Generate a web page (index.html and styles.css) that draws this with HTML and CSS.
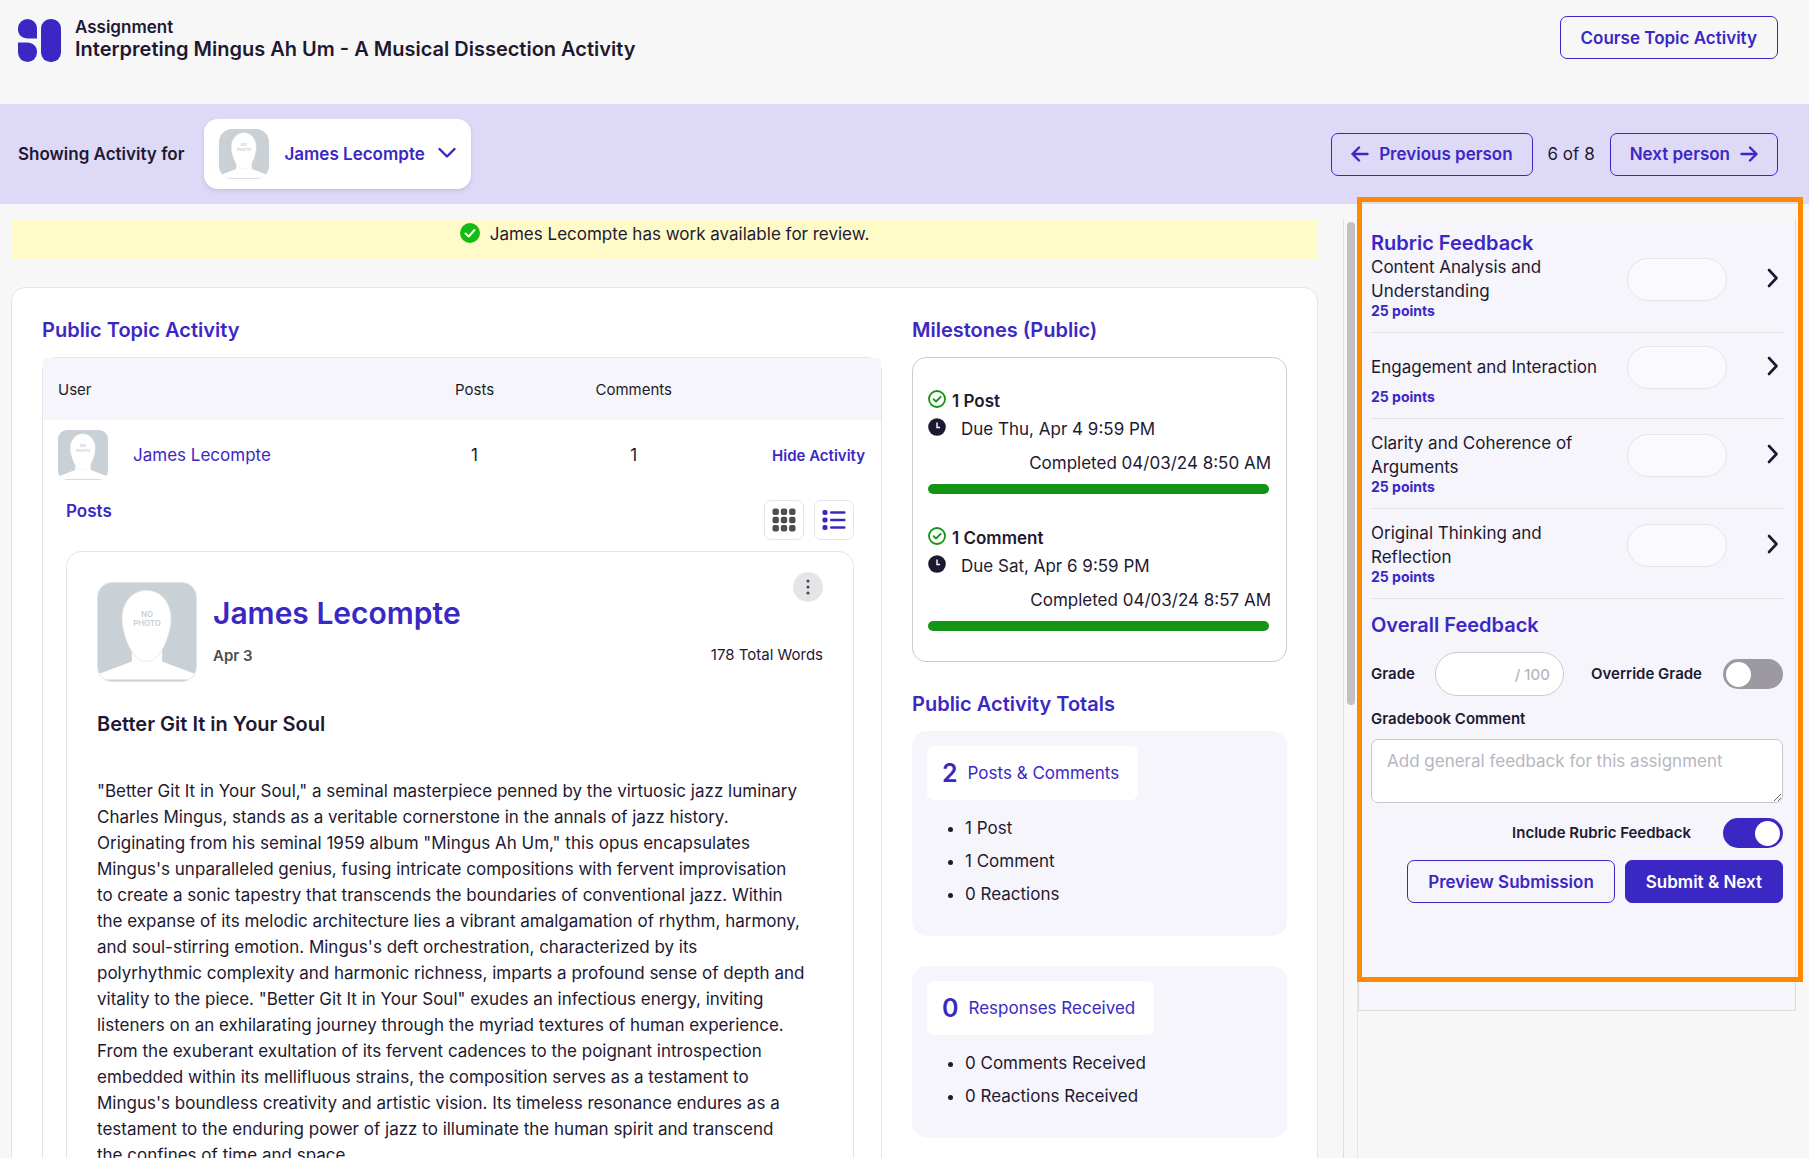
FILE: index.html
```html
<!doctype html>
<html lang="en">
<head>
    <meta charset="UTF-8">
    <meta name="viewport" content="width=device-width, initial-scale=1.0">
    <title>Interpreting Mingus Ah Um - A Musical Dissection Activity</title>
    <link rel="stylesheet" href="styles.css">
</head>
<body>

<!-- shared icons -->
<svg class="sprite" aria-hidden="true">
    <symbol id="no-photo" viewBox="0 0 100 100">
        <rect width="100" height="100" fill="#c9d0d6"/>
        <path d="M0 93 L34.5 80 V66 H65.5 V80 L100 93 V98.5 H0 Z" fill="#fff"/>
        <path d="M49.5 7.5 C64 7.5 74.5 20 74.5 36 C74.5 50 68 66 62 73.500 C58 78.500 54 80 49.500 80 C45 80 41 78.500 37 73.500 C31 66 24.500 50 24.500 36 C24.500 20 35 7.500 49.500 7.500 Z" fill="#fff" stroke="#dfe3e6" stroke-width=".8"/>
        <text x="50" y="34.500" class="no-photo-text">NO</text>
        <text x="50" y="43.500" class="no-photo-text">PHOTO</text>
    </symbol>
    <symbol id="chevron-right" viewBox="0 0 12 20">
        <path d="M2 2 L9.500 10 L2 18" fill="none" stroke="currentColor" stroke-width="2.600" stroke-linecap="round" stroke-linejoin="round"/>
    </symbol>
    <symbol id="done" viewBox="0 0 18 18">
        <circle cx="9" cy="9" r="8" fill="none" stroke="#149414" stroke-width="1.800"/>
        <path d="M5.500 9.200 L8 11.500 L12.700 6.800" fill="none" stroke="#149414" stroke-width="1.800" stroke-linecap="round" stroke-linejoin="round"/>
    </symbol>
    <symbol id="clock" viewBox="0 0 18 18">
        <circle cx="9" cy="9" r="8.800" fill="#1e1932"/>
        <path d="M9 4.500 V9.500 H12" fill="none" stroke="#fff" stroke-width="1.400"/>
    </symbol>
</svg>

<header class="top">
    <svg class="logo" viewBox="0 0 43 43">
        <path d="M9.500 0 A9.500 9.500 0 0 1 19 9.500 V19.500 H10 C4 19.500 0 15.500 0 10.500 V9.500 A9.500 9.500 0 0 1 9.500 0 Z"/>
        <path d="M0 23.500 H9 C15 23.500 19 27.500 19 32.500 V33.500 A9.500 9.500 0 0 1 0 33.500 Z"/>
        <rect x="23" width="20" height="43" rx="9.500"/>
    </svg>
    <div class="top-title">
        <p>Assignment</p>
        <h1>Interpreting Mingus Ah Um - A Musical Dissection Activity</h1>
    </div>
    <button class="btn" type="button">Course Topic Activity</button>
</header>

<nav class="person-bar">
    <label for="person">Showing Activity for</label>
    <div class="person-card">
        <svg class="avatar avatar-round"><use href="#no-photo"/></svg>
        <div class="person-select">
            <select id="person">
                <option>James Lecompte</option>
            </select>
            <svg class="chevron-down" viewBox="0 0 18 12"><path d="M1.500 2 L9 9.500 L16.500 2" fill="none" stroke="currentColor" stroke-width="2.400" stroke-linecap="round" stroke-linejoin="round"/></svg>
        </div>
    </div>
    <div class="pager">
        <button class="btn" type="button">
            <svg class="arrow" viewBox="0 0 18 16"><path d="M8 1.500 L1.500 8 L8 14.500 M1.500 8 H16.500"/></svg>
            Previous person
        </button>
        <span>6 of 8</span>
        <button class="btn" type="button">
            Next person
            <svg class="arrow" viewBox="0 0 18 16"><path d="M10 1.500 L16.500 8 L10 14.500 M16.500 8 H1.500"/></svg>
        </button>
    </div>
</nav>

<main class="workspace">
    <div class="activity">
        <p class="notice">
            <svg viewBox="0 0 20 20"><circle cx="10" cy="10" r="10" fill="#14bb14"/><path d="M5.500 10.500 L8.700 13.500 L14.500 7" fill="none" stroke="#fff" stroke-width="2" stroke-linecap="round" stroke-linejoin="round"/></svg>
            James Lecompte has work available for review.
        </p>

        <div class="card">
            <section class="topic">
                <h2>Public Topic Activity</h2>
                <div class="topic-box">
                    <table>
                        <thead>
                            <tr>
                                <th class="col-user">User</th>
                                <th>Posts</th>
                                <th>Comments</th>
                                <th class="col-action"></th>
                            </tr>
                        </thead>
                        <tbody>
                            <tr>
                                <td class="col-user">
                                    <div class="user">
                                        <svg class="avatar"><use href="#no-photo"/></svg>
                                        <a href="#">James Lecompte</a>
                                    </div>
                                </td>
                                <td>1</td>
                                <td>1</td>
                                <td class="col-action"><button class="link-btn" type="button">Hide Activity</button></td>
                            </tr>
                        </tbody>
                    </table>

                    <div class="posts">
                        <div class="posts-head">
                            <h3>Posts</h3>
                            <button class="view-btn" type="button" aria-label="Grid view">
                                <svg viewBox="0 0 24 24" fill="#4d4d4d">
                                    <rect x="0.500" y="0.500" width="6.400" height="6.400" rx="2"/><rect x="8.800" y="0.500" width="6.400" height="6.400" rx="2"/><rect x="17.100" y="0.500" width="6.400" height="6.400" rx="2"/>
                                    <rect x="0.500" y="8.800" width="6.400" height="6.400" rx="2"/><rect x="8.800" y="8.800" width="6.400" height="6.400" rx="2"/><rect x="17.100" y="8.800" width="6.400" height="6.400" rx="2"/>
                                    <rect x="0.500" y="17.100" width="6.400" height="6.400" rx="2"/><rect x="8.800" y="17.100" width="6.400" height="6.400" rx="2"/><rect x="17.100" y="17.100" width="6.400" height="6.400" rx="2"/>
                                </svg>
                            </button>
                            <button class="view-btn" type="button" aria-label="List view">
                                <svg viewBox="0 0 24 24" fill="#3b28c4">
                                    <rect x="0.500" y="2" width="5" height="5" rx="1.800"/><rect x="8" y="3.300" width="15.500" height="2.400" rx="1.200"/>
                                    <rect x="0.500" y="9.500" width="5" height="5" rx="1.800"/><rect x="8" y="10.800" width="15.500" height="2.400" rx="1.200"/>
                                    <rect x="0.500" y="17" width="5" height="5" rx="1.800"/><rect x="8" y="18.300" width="15.500" height="2.400" rx="1.200"/>
                                </svg>
                            </button>
                        </div>

                        <article class="post">
                            <div class="post-head">
                                <svg class="avatar avatar-lg"><use href="#no-photo"/></svg>
                                <div class="post-author">
                                    <h2>James Lecompte</h2>
                                    <time>Apr 3</time>
                                </div>
                                <div class="post-side">
                                    <button class="more-btn" type="button" aria-label="More">
                                        <svg viewBox="0 0 4 16"><circle cx="2" cy="2" r="1.600"/><circle cx="2" cy="8" r="1.600"/><circle cx="2" cy="14" r="1.600"/></svg>
                                    </button>
                                    <span>178 Total Words</span>
                                </div>
                            </div>
                            <h3>Better Git It in Your Soul</h3>
                            <p>
                                "Better Git It in Your Soul," a seminal masterpiece penned by the virtuosic jazz luminary<br>
                                Charles Mingus, stands as a veritable cornerstone in the annals of jazz history.<br>
                                Originating from his seminal 1959 album "Mingus Ah Um," this opus encapsulates<br>
                                Mingus's unparalleled genius, fusing intricate compositions with fervent improvisation<br>
                                to create a sonic tapestry that transcends the boundaries of conventional jazz. Within<br>
                                the expanse of its melodic architecture lies a vibrant amalgamation of rhythm, harmony,<br>
                                and soul-stirring emotion. Mingus's deft orchestration, characterized by its<br>
                                polyrhythmic complexity and harmonic richness, imparts a profound sense of depth and<br>
                                vitality to the piece. "Better Git It in Your Soul" exudes an infectious energy, inviting<br>
                                listeners on an exhilarating journey through the myriad textures of human experience.<br>
                                From the exuberant exultation of its fervent cadences to the poignant introspection<br>
                                embedded within its mellifluous strains, the composition serves as a testament to<br>
                                Mingus's boundless creativity and artistic vision. Its timeless resonance endures as a<br>
                                testament to the enduring power of jazz to illuminate the human spirit and transcend<br>
                                the confines of time and space.
                            </p>
                        </article>
                    </div>
                </div>
            </section>

            <aside class="stats">
                <h2>Milestones (Public)</h2>
                <div class="milestones">
                    <div class="milestone">
                        <h4><svg><use href="#done"/></svg>1 Post</h4>
                        <p class="due"><svg><use href="#clock"/></svg>Due Thu, Apr 4 9:59 PM</p>
                        <p class="completed">Completed 04/03/24 8:50 AM</p>
                        <div class="bar"></div>
                    </div>
                    <div class="milestone">
                        <h4><svg><use href="#done"/></svg>1 Comment</h4>
                        <p class="due"><svg><use href="#clock"/></svg>Due Sat, Apr 6 9:59 PM</p>
                        <p class="completed">Completed 04/03/24 8:57 AM</p>
                        <div class="bar"></div>
                    </div>
                </div>

                <h2>Public Activity Totals</h2>
                <div class="total">
                    <p class="chip"><strong>2</strong>Posts &amp; Comments</p>
                    <ul>
                        <li>1 Post</li>
                        <li>1 Comment</li>
                        <li>0 Reactions</li>
                    </ul>
                </div>
                <div class="total">
                    <p class="chip"><strong>0</strong>Responses Received</p>
                    <ul>
                        <li>0 Comments Received</li>
                        <li>0 Reactions Received</li>
                    </ul>
                </div>
            </aside>
        </div>
    </div>

    <div class="scroll-track"><div class="scroll-thumb"></div></div>

    <div class="side">
        <form class="feedback">
            <h2>Rubric Feedback</h2>
            <div class="rubric">
                <div class="rubric-line">
                    <label for="r1">Content Analysis and Understanding</label>
                    <input id="r1" type="text" disabled>
                    <button type="button" aria-label="Open"><svg><use href="#chevron-right"/></svg></button>
                </div>
                <p>25 points</p>
            </div>
            <div class="rubric">
                <div class="rubric-line">
                    <label for="r2">Engagement and Interaction</label>
                    <input id="r2" type="text" disabled>
                    <button type="button" aria-label="Open"><svg><use href="#chevron-right"/></svg></button>
                </div>
                <p>25 points</p>
            </div>
            <div class="rubric">
                <div class="rubric-line">
                    <label for="r3">Clarity and Coherence of Arguments</label>
                    <input id="r3" type="text" disabled>
                    <button type="button" aria-label="Open"><svg><use href="#chevron-right"/></svg></button>
                </div>
                <p>25 points</p>
            </div>
            <div class="rubric">
                <div class="rubric-line">
                    <label for="r4">Original Thinking and Reflection</label>
                    <input id="r4" type="text" disabled>
                    <button type="button" aria-label="Open"><svg><use href="#chevron-right"/></svg></button>
                </div>
                <p>25 points</p>
            </div>

            <h2 class="overall">Overall Feedback</h2>
            <div class="grade-row">
                <label for="grade">Grade</label>
                <input id="grade" class="grade" type="text" placeholder="/ 100">
                <label for="override" class="push">Override Grade</label>
                <input id="override" class="toggle" type="checkbox">
            </div>
            <label for="comment" class="comment-label">Gradebook Comment</label>
            <textarea id="comment" placeholder="Add general feedback for this assignment"></textarea>
            <div class="include-row">
                <label for="include">Include Rubric Feedback</label>
                <input id="include" class="toggle" type="checkbox" checked>
            </div>
            <div class="actions">
                <button class="btn" type="button">Preview Submission</button>
                <button class="btn btn-primary" type="submit">Submit &amp; Next</button>
            </div>
        </form>
        <div class="highlight"></div>
    </div>
</main>

</body>
</html>
```
FILE: styles.css
```css
* {
    box-sizing: border-box;
    margin: 0;
    padding: 0;
}

body {
    display: flex;
    flex-direction: column;
    height: 100vh;
    overflow: hidden;
    background: #f7f7f7;
    color: #1e1932;
    font: 17px/24px Inter, "Liberation Sans", sans-serif;
}

button,
input,
select,
textarea {
    font: inherit;
    color: inherit;
}

button {
    border: 0;
    background: none;
}

svg {
    display: block;
    flex: none;
}

a {
    color: #3b28c4;
    text-decoration: none;
}

h2 {
    color: #3b28c4;
    font-size: 20px;
    font-weight: 600;
    line-height: 24px;
}

.sprite {
    display: none;
}

.no-photo-text {
    fill: #c9cdd1;
    font-size: 8px;
    font-weight: 600;
    text-anchor: middle;
}

.btn {
    display: flex;
    align-items: center;
    gap: 10px;
    height: 43px;
    padding: 0 19px;
    border: 1px solid #3b28c4;
    border-radius: 7px;
    color: #3b28c4;
    font-weight: 600;
    white-space: nowrap;
}

.btn-primary {
    background: #3b28c4;
    color: #fff;
}

.avatar {
    width: 50px;
    height: 50px;
    border-radius: 9px;
}

.avatar-round {
    border-radius: 13px;
}

.avatar-lg {
    width: 100px;
    height: 100px;
    border: 1px solid #e3e3e6;
    border-radius: 15px;
}

/* header */
.top {
    display: flex;
    flex: none;
    align-items: flex-start;
    height: 104px;
    padding: 16px 31px 0 18px;
}

.logo {
    width: 43px;
    height: 43px;
    margin-top: 3px;
    fill: #3b28c4;
}

.top-title {
    flex: 1;
    margin-left: 14px;
    font-weight: 600;
    line-height: 22px;
}

.top-title h1 {
    font-size: 20px;
    font-weight: 600;
}

/* person switcher */
.person-bar {
    display: flex;
    flex: none;
    align-items: center;
    height: 100px;
    padding: 0 31px 0 18px;
    background: #ded9f7;
    font-weight: 600;
}

.person-card {
    display: flex;
    align-items: center;
    gap: 15px;
    height: 70px;
    margin-left: 20px;
    padding: 0 15px;
    border-radius: 14px;
    background: #fff;
    box-shadow: 0 2px 4px rgba(30, 25, 50, 0.12);
}

.person-select {
    position: relative;
    color: #3b28c4;
}

.person-select select {
    appearance: none;
    padding-right: 31px;
    border: 0;
    background: none;
}

.chevron-down {
    position: absolute;
    top: 5px;
    right: 0;
    width: 18px;
    height: 12px;
    pointer-events: none;
}

.pager {
    display: flex;
    align-items: center;
    gap: 15px;
    margin-left: auto;
    font-weight: 400;
}

.arrow {
    width: 18px;
    height: 16px;
    fill: none;
    stroke: currentColor;
    stroke-width: 2.4px;
    stroke-linecap: round;
    stroke-linejoin: round;
}

/* main area */
.workspace {
    display: flex;
    flex: 1;
    min-height: 0;
    padding: 15px 13px 0 11px;
}

.activity {
    flex: 1;
    min-width: 0;
    overflow: hidden;
    padding-right: 25px;
}

.notice {
    display: flex;
    justify-content: center;
    gap: 10px;
    height: 41px;
    padding-top: 3px;
    background: #fefbc9;
}

.notice svg {
    width: 20px;
    height: 20px;
    margin-top: 1px;
}

.card {
    display: flex;
    gap: 30px;
    margin-top: 27px;
    padding: 30px;
    border: 1px solid #e5e5e8;
    border-radius: 14px;
    background: #fff;
}

.card h2 {
    margin-bottom: 15px;
}

.topic {
    flex: 1;
    min-width: 0;
}

.topic-box {
    border: 1px solid #e5e5e8;
    border-radius: 14px;
}

table {
    width: 100%;
    border-collapse: collapse;
    table-layout: fixed;
    text-align: center;
}

th {
    height: 62px;
    padding-top: 2px;
    background: #f6f5fb;
    color: #1c1c1f;
    font-size: 15px;
    font-weight: 400;
}

td {
    height: 70px;
}

.col-user {
    width: 42%;
    padding-left: 15px;
    text-align: left;
}

.col-action {
    width: 20%;
    padding-right: 16px;
    text-align: right;
}

.user {
    display: flex;
    align-items: center;
    gap: 25px;
}

.link-btn {
    color: #3b28c4;
    font-size: 15px;
    font-weight: 600;
}

.posts {
    padding: 10px 27px 30px 23px;
}

.posts-head {
    display: flex;
    gap: 10px;
    height: 51px;
}

.posts-head h3 {
    flex: 1;
    color: #3b28c4;
    font-size: 17px;
    font-weight: 600;
    line-height: 22px;
}

.view-btn {
    display: flex;
    align-items: center;
    justify-content: center;
    width: 40px;
    height: 40px;
    border: 1px solid #e5e5e8;
    border-radius: 7px;
}

.view-btn svg {
    width: 24px;
    height: 24px;
}

.post {
    padding: 30px;
    border: 1px solid #e5e5e8;
    border-radius: 15px;
}

.post-head {
    display: flex;
    gap: 16px;
}

.post-author {
    flex: 1;
    padding-top: 11px;
}

.post-author h2 {
    margin-bottom: 10px;
    font-size: 30px;
    line-height: 40px;
}

.post-author time {
    color: #4d4d4d;
    font-size: 15px;
    font-weight: 600;
}

.post-side {
    display: flex;
    flex-direction: column;
    align-items: flex-end;
    justify-content: space-between;
    height: 95px;
    margin-top: -10px;
    font-size: 15px;
}

.more-btn {
    display: flex;
    align-items: center;
    justify-content: center;
    width: 30px;
    height: 30px;
    border-radius: 50%;
    background: #e5e5e8;
}

.more-btn svg {
    width: 4px;
    height: 16px;
    fill: #4b465c;
}

.post > h3 {
    margin: 30px 0 42px;
    font-size: 20px;
    font-weight: 600;
}

.post > p {
    line-height: 26px;
}

/* milestones and totals */
.stats {
    flex: none;
    width: 375px;
}

.milestones {
    margin-bottom: 30px;
    padding: 31px 15px 30px;
    border: 1px solid #ccc;
    border-radius: 14px;
}

.milestone + .milestone {
    margin-top: 32px;
}

.milestone h4 {
    display: flex;
    gap: 6px;
    font-weight: 600;
}

.milestone svg {
    width: 18px;
    height: 18px;
    margin-top: 1px;
}

.due {
    display: flex;
    gap: 15px;
    margin-top: 4px;
}

.completed {
    margin: 10px 0 9px;
    text-align: right;
}

.bar {
    height: 10px;
    margin-right: 2px;
    border-radius: 5px;
    background: #149414;
}

.total {
    margin-bottom: 30px;
    padding: 15px 15px 30px;
    border-radius: 15px;
    background: #f6f5fb;
}

.chip {
    display: flex;
    align-items: center;
    gap: 10px;
    width: fit-content;
    height: 54px;
    padding: 0 19px 0 15px;
    border-radius: 7px;
    background: #fff;
    color: #3b28c4;
}

.chip strong {
    font-size: 25px;
    font-weight: 600;
}

.total ul {
    display: flex;
    flex-direction: column;
    gap: 9px;
    margin-top: 16px;
    padding-left: 38px;
}

/* scrollbar of the activity column */
.scroll-track {
    flex: none;
    width: 14px;
    padding: 3px 0 0 3px;
    border-left: 1px solid #dfdfe2;
}

.scroll-thumb {
    width: 8px;
    height: 483px;
    border-radius: 4px;
    background: #c1c1c1;
}

/* feedback form */
.side {
    position: relative;
    flex: none;
    width: 439px;
    border-left: 1px solid #e5e5e8;
}

.feedback {
    height: 792px;
    padding: 12px 12px 0;
    border: 1px solid #dcdce0;
    border-top: 0;
    background: #f6f5fb;
    font-size: 15px;
    font-weight: 600;
}

.rubric {
    padding: 12px 0 13px;
    border-bottom: 1px solid #e3e3e6;
}

h2 + .rubric {
    padding-top: 0;
}

.rubric-line {
    display: flex;
    align-items: center;
    min-height: 44px;
    font-size: 17px;
    font-weight: 400;
}

.rubric-line label {
    flex: 1;
    padding-right: 20px;
}

.rubric-line input {
    width: 100px;
    height: 43px;
    border: 1px solid #e5e5e8;
    border-radius: 22px;
    background: #faf9fe;
}

.rubric-line button {
    margin: 0 4px 2px 40px;
}

.rubric-line svg {
    width: 12px;
    height: 20px;
}

.rubric p {
    color: #3b28c4;
    font-size: 14px;
    font-weight: 700;
    line-height: 16px;
}

.overall {
    margin: 14px 0 15px;
}

.grade-row,
.include-row {
    display: flex;
    align-items: center;
}

.grade {
    width: 129px;
    height: 44px;
    margin-left: 20px;
    padding: 0 13px;
    border: 1px solid #ccc;
    border-radius: 22px;
    background: #fff;
    font-weight: 500;
    text-align: right;
}

::placeholder {
    color: #b8b6bf;
}

.push {
    margin-left: auto;
}

.toggle {
    display: flex;
    align-items: center;
    width: 60px;
    height: 30px;
    margin-left: 21px;
    padding: 3px;
    appearance: none;
    border-radius: 15px;
    background: #9d99a3;
}

.toggle::before {
    content: "";
    width: 25px;
    height: 25px;
    border-radius: 50%;
    background: #fff;
}

.toggle:checked {
    justify-content: flex-end;
    background: #3b28c4;
}

.comment-label {
    display: block;
    margin: 11px 0 8px;
}

textarea {
    display: block;
    width: 100%;
    height: 64px;
    padding: 9px 15px;
    border: 1px solid #c8c7cd;
    border-radius: 7px;
    background: #fff;
    font-size: 17px;
    font-weight: 400;
}

.include-row {
    justify-content: flex-end;
    margin: 15px 0 12px;
}

.include-row .toggle {
    margin-left: 32px;
}

.actions {
    display: flex;
    justify-content: flex-end;
    gap: 10px;
    font-size: 17px;
}

.top .btn,
.actions .btn {
    padding: 0 20px;
}

/* callout frame drawn over the form */
.highlight {
    position: absolute;
    top: -22px;
    right: -7px;
    left: -1px;
    height: 785px;
    border: 5px solid #ff8a00;
    pointer-events: none;
}
```
